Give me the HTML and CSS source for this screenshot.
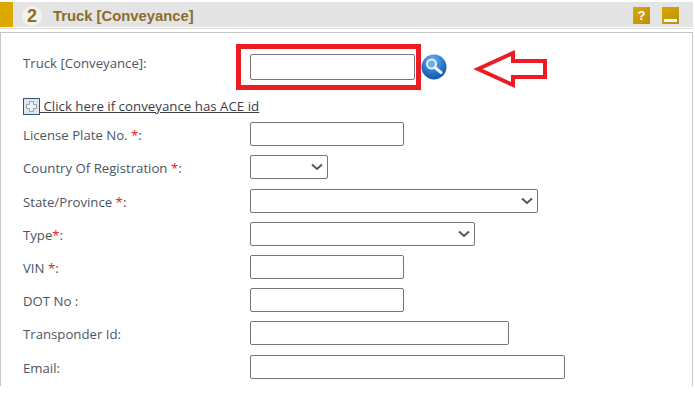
FILE: index.html
```html
<!DOCTYPE html>
<html lang="en">
<head>
<meta charset="utf-8">
<title>Truck [Conveyance]</title>
<link rel="stylesheet" href="styles.css">
</head>
<body>
<div class="page">
  <header class="head">
    <span class="head-tab"></span>
    <span class="head-num">2</span>
    <h2 class="head-title">Truck [Conveyance]</h2>
    <span class="head-btn head-help">?</span>
    <span class="head-btn head-min"><span class="min-bar"></span></span>
  </header>
  <div class="head-rule"></div>
  <section class="panel">
    <div class="row row-first">
      <label class="lbl lbl-first">Truck [Conveyance]:</label>
      <input class="field w-165" type="text">
      <svg class="search" width="26" height="26" viewBox="0 0 26 26" aria-hidden="true">
        <defs>
          <radialGradient id="ball" cx="45%" cy="25%" r="80%">
            <stop offset="0" stop-color="#6fb2ee"/>
            <stop offset="0.55" stop-color="#2a78cc"/>
            <stop offset="1" stop-color="#0f4f9f"/>
          </radialGradient>
        </defs>
        <circle cx="13" cy="13" r="12.5" fill="url(#ball)"/>
        <circle cx="10.500" cy="10" r="4.500" fill="#6aaeea" stroke="#e6f1fb" stroke-width="2"/>
        <path d="M14 13.500l6 5" stroke="#eef5fc" stroke-width="3" stroke-linecap="round"/>
      </svg>
    </div>
    <div class="ace">
      <svg class="plus" width="17" height="17" viewBox="0 0 17 17" aria-hidden="true">
        <rect x="0.500" y="0.500" width="16" height="16" fill="#dfe6ee" stroke="#2f5379"/>
        <path d="M6.500 3.500h4v3h3v4h-3v3h-4v-3h-3v-4h3z" fill="#eef1f4" stroke="#9aa3ac"/>
      </svg>
      <a class="ace-link" href="#"> Click here if conveyance has ACE id</a>
    </div>
    <div class="row r1"><label class="lbl">License Plate No. <span class="req">*</span>:</label><input class="field w-154" type="text"></div>
    <div class="row r2"><label class="lbl">Country Of Registration <span class="req">*</span>:</label><select class="field sel w-78"></select></div>
    <div class="row r3"><label class="lbl">State/Province <span class="req">*</span>:</label><select class="field sel w-288"></select></div>
    <div class="row r2"><label class="lbl">Type<span class="req">*</span>:</label><select class="field sel w-225"></select></div>
    <div class="row r2"><label class="lbl">VIN <span class="req">*</span>:</label><input class="field w-154" type="text"></div>
    <div class="row r2"><label class="lbl">DOT No :</label><input class="field w-154" type="text"></div>
    <div class="row r2"><label class="lbl">Transponder Id:</label><input class="field w-259" type="text"></div>
    <div class="row r3"><label class="lbl">Email:</label><input class="field w-315" type="text"></div>
  </section>
  <div class="callout-box"></div>
  <svg class="callout-arrow" width="76" height="40" viewBox="0 0 76 40" aria-hidden="true">
    <path d="M5 20L40 4V12H72V28H40V36Z" fill="#fff" stroke="#ed1c24" stroke-width="4" stroke-linejoin="miter"/>
  </svg>
</div>
</body>
</html>
```
FILE: styles.css
```css
* { box-sizing: border-box; }
html, body { margin: 0; padding: 0; background: #fff; }
body { font-family: "Open Sans", "Noto Sans", sans-serif; overflow: hidden; }
.page { position: relative; width: 695px; height: 405px; padding-top: 2px; }

.head { display: flex; align-items: center; width: 693px; height: 25px; padding-top: 0; background: #e4e4e4; }
.head-tab { width: 13px; height: 25px; background: #dba800; flex: none; }
.head-num {
  flex: none; width: 20px; height: 20px; margin: 2px 0 0 9px; border-radius: 50%;
  background: #f4f3ea; color: #8b6f2a; font: bold 18px/20px "Liberation Sans", sans-serif; text-align: center;
}
.head-title { margin: 3px 0 0 11px; flex: 1; color: #8a6d2b; font: bold 14.800px/22px "Liberation Sans", sans-serif; }
.head-btn { flex: none; width: 17px; height: 17px; margin-top: 2px; background: linear-gradient(135deg, #dba800, #b98f0a); color: #fff; display: flex; justify-content: center; }
.head-help { margin-right: 12px; font: bold 13px/17px "Liberation Sans", sans-serif; }
.head-min { margin-right: 14px; align-items: flex-end; }
.min-bar { width: 13px; height: 3px; margin-bottom: 2px; background: #fff; }
.head-rule { width: 693px; height: 1px; margin-top: 1px; background: #d8d8d8; }

.panel {
  width: 693px; height: 354px; margin-top: 3px; padding: 0 0 0 22px;
  border: 1px solid #c6c6c6; border-bottom: 0;
}
.row { display: flex; align-items: center; height: 24px; }
.row-first { margin-top: 20px; height: 28px; }
.lbl { width: 227px; flex: none; padding-top: 1px; color: #4d5563; font-size: 13.200px; line-height: 20px; }
.lbl-first { align-self: flex-start; margin-top: 0; padding-top: 0; }
.req { color: #e21a1a; }
.field {
  height: 24px; margin: 0; padding: 0; border: 1px solid #767676; border-radius: 2px;
  background: #fff; flex: none;
}
.row-first .field { height: 26px; }
.sel {
  appearance: none;
  background: #fff url("data:image/svg+xml,%3Csvg xmlns='http://www.w3.org/2000/svg' width='12' height='8'%3E%3Cpath d='M1 1.500l5 4.500 5-4.500' fill='none' stroke='%23555' stroke-width='2'/%3E%3C/svg%3E") no-repeat right 4px center;
}
.w-78 { width: 78px; }
.w-154 { width: 154px; }
.w-165 { width: 165px; }
.w-225 { width: 225px; }
.w-259 { width: 259px; }
.w-288 { width: 288px; }
.w-315 { width: 315px; }
.search { margin-left: 6px; flex: none; }

.ace { display: flex; align-items: flex-end; height: 20px; margin-top: 14px; margin-bottom: 7px; }
.plus { flex: none; }
.ace-link { color: #3b4048; font-size: 13.300px; line-height: 18px; text-decoration: underline; white-space: pre; }

.r1 { margin-top: 0; }
.r2 { margin-top: 9px; }
.r3 { margin-top: 10px; }

.callout-box { position: absolute; left: 236px; top: 44px; width: 185px; height: 46px; border: 5px solid #ed1c24; }
.callout-arrow { position: absolute; left: 473px; top: 49px; }
```
